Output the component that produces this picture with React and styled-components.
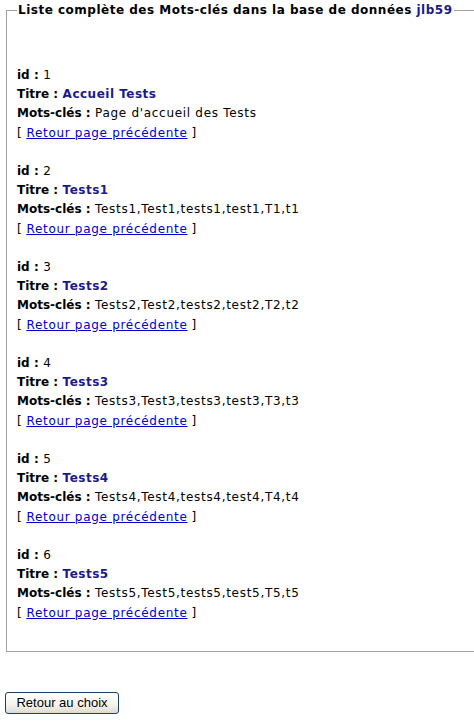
import React from 'react';
import styled, { createGlobalStyle } from 'styled-components';

const GlobalStyle = createGlobalStyle`
  html, body {
    margin: 0;
    padding: 0;
    background: #ffffff;
    overflow-x: hidden;
  }
  body {
    font-family: "DejaVu Sans", Verdana, sans-serif;
    font-size: 12px;
    color: #000;
  }
`;

const Page = styled.div`
  padding: 0 0 0 6px;
`;

const Fieldset = styled.fieldset`
  margin: 0;
  padding: 0 10px 28px 10px;
  border: 1px solid #a0a0a0;
  border-right: none;
  min-width: 0;
`;

const Legend = styled.legend`
  padding: 0 1px;
  font-weight: bold;
  font-size: 12px;
  line-height: 20px;
  margin-top: 2px;
  letter-spacing: 0.5px;
`;

const Owner = styled.span`
  color: #1a1a8c;
`;

const List = styled.div`
  padding-top: 46px;
  line-height: 19.2px;
`;

const Entry = styled.div`
  margin-bottom: 19.2px;
  &:last-child {
    margin-bottom: 0;
  }
`;

const Line = styled.div`
  white-space: nowrap;
  letter-spacing: 0.7px;
`;

const Label = styled.b`
  font-weight: bold;
  letter-spacing: 0;
`;

const Title = styled.b`
  color: #1a1a8c;
  font-weight: bold;
  letter-spacing: 0.5px;
`;

const Link = styled.a`
  color: #0000cc;
  text-decoration: underline;
  margin: 0 4px;
`;

const Footer = styled.div`
  padding: 40px 0 0 0;
  margin-left: -1px;
`;

const Button = styled.button`
  width: 114px;
  height: 22px;
  padding: 0;
  font-family: "Liberation Sans", Arial, sans-serif;
  font-size: 13px;
  color: #000;
  border: 1px solid #1c3f6e;
  border-radius: 3px;
  background: linear-gradient(#ffffff 0%, #f4f3ee 60%, #dcdad0 100%);
  cursor: pointer;
`;

const entries = [
  { id: 1, titre: 'Accueil Tests', mots: "Page d'accueil des Tests" },
  { id: 2, titre: 'Tests1', mots: 'Tests1,Test1,tests1,test1,T1,t1' },
  { id: 3, titre: 'Tests2', mots: 'Tests2,Test2,tests2,test2,T2,t2' },
  { id: 4, titre: 'Tests3', mots: 'Tests3,Test3,tests3,test3,T3,t3' },
  { id: 5, titre: 'Tests4', mots: 'Tests4,Test4,tests4,test4,T4,t4' },
  { id: 6, titre: 'Tests5', mots: 'Tests5,Test5,tests5,test5,T5,t5' },
];

const App = () => (
  <Page>
    <GlobalStyle />
    <Fieldset>
      <Legend>
        Liste complète des Mots-clés dans la base de données <Owner>jlb59</Owner>
      </Legend>
      <List>
        {entries.map((e) => (
          <Entry key={e.id}>
            <Line><Label>id :</Label> {e.id}</Line>
            <Line><Label>Titre :</Label> <Title>{e.titre}</Title></Line>
            <Line><Label>Mots-clés :</Label> {e.mots}</Line>
            <Line>[<Link href="#">Retour page précédente</Link>]</Line>
          </Entry>
        ))}
      </List>
    </Fieldset>
    <Footer>
      <Button>Retour au choix</Button>
    </Footer>
  </Page>
);

export default App;
